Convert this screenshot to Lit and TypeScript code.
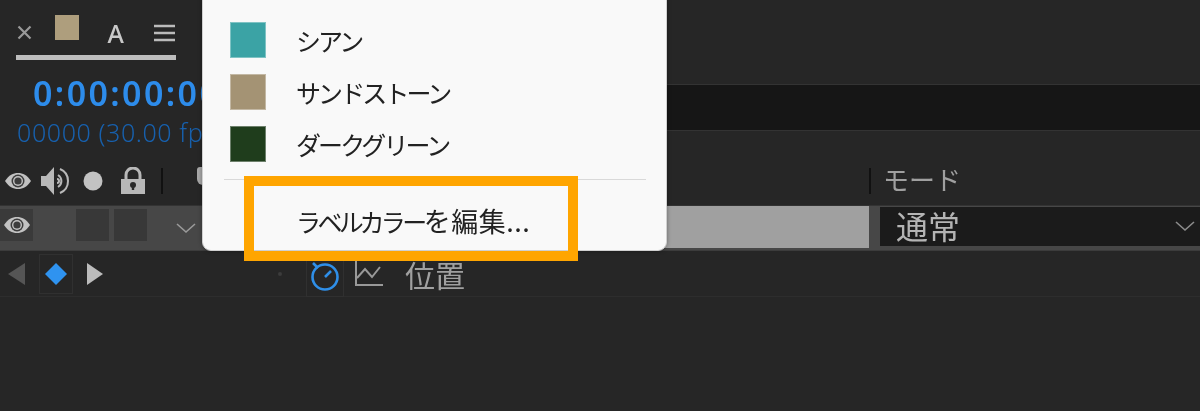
import { LitElement, html, css, svg } from "lit";
import { customElement } from "lit/decorators.js";

const eye = svg`<svg width="28" height="20" viewBox="0 0 28 20"><path d="M1 10C5 4 9 2 14 2s9 2 13 8c-4 6-8 8-13 8S5 16 1 10Z" fill="#c2c2c2"/><circle cx="14" cy="10" r="6.5" fill="#3c3c3c"/><circle cx="14" cy="10" r="5" fill="#c2c2c2"/><circle cx="14" cy="10" r="3.6" fill="#3c3c3c"/></svg>`;

@customElement("app-root")
export class AppRoot extends LitElement {
  static styles = css`
    :host { display: block; width: 1200px; height: 411px; overflow: hidden; position: relative; background: #262626; font-family: "Noto Sans CJK JP", "Noto Sans", sans-serif; filter: blur(0.4px); }
    svg { display: block; flex: none; }
    .top { display: flex; height: 157px; }
    .panel { width: 202px; flex: none; overflow: hidden; padding: 15px 0 0 16px; box-sizing: border-box; }
    .tabs { display: flex; height: 40px; width: 159px; }
    .tabs .close { margin: 10px 23px 0 1px; }
    .tabs .chip { width: 25px; height: 25px; background: #ae9e7d; }
    .tabs .a { margin: 0 30px 0 29px; width: 17px; color: #c8c8c8; font: 500 25px/36px "Noto Sans", sans-serif; }
    .tabs .menu { margin-top: 9px; }
    .rule { width: 160px; height: 5px; background: #bdbdbd; }
    .time { margin: 11px 0 0 17px; color: #2d8ceb; font: 600 34px/44px "Noto Sans", sans-serif; white-space: nowrap; letter-spacing: 2.4px; }
    .fps { margin: 1px 0 0 1px; color: #1760ad; font: 300 25px/32px "Noto Sans", sans-serif; white-space: nowrap; letter-spacing: .6px; }
    .bands { flex: 1; display: flex; flex-direction: column; }
    .spacer { height: 84px; border-bottom: 1px solid #333; }
    .dark { height: 45px; background: #161616; border-bottom: 1px solid #333; }
    .head { height: 48px; display: flex; align-items: center; position: relative; }
    .head .group { display: flex; align-items: center; }
    .bar { width: 2px; height: 26px; background: #111; }
    .tag { width: 8px; height: 18px; background: #a8a8a8; border-radius: 3px 0 0 6px; margin: -10px 0 0 34px; }
    .head .mode-wrap { margin-left: auto; width: 331px; display: flex; align-items: center; gap: 12px; color: #a0a0a0; font-size: 26px; line-height: 40px; }
    .mode-wrap span { margin-top: -4px; }
    .layer { height: 44px; background: #474747; display: flex; align-items: flex-start; border-top: 1px solid #333; border-bottom: 1px solid #3c3c3c; }
    .eyecell { width: 33px; height: 32px; background: #3a3a3a; display: flex; align-items: center; justify-content: center; margin-top: 3px; }
    .sq { width: 33px; height: 32px; background: #383838; margin-top: 3px; }
    .sq.first { margin-left: 43px; }
    .sq.second { margin-left: 5px; }
    .chev { margin: 17px 0 0 29px; }
    .grow { flex: 1; }
    .gray { width: 204px; height: 42px; background: #a0a0a0; }
    .sep { width: 11px; }
    .select { width: 320px; height: 39px; margin-top: 1px; background: #1b1b1b; display: flex; align-items: center; justify-content: space-between; padding: 0 5px 0 16px; box-sizing: border-box; color: #b4b4b4; font-size: 32px; line-height: 39px; }
    .select span { margin-top: -3px; }
    .prop { height: 45px; display: flex; align-items: center; border-bottom: 1px solid #2d2d2d; }
    .kf { width: 32px; height: 38px; border: 1px solid #303030; display: flex; align-items: center; justify-content: center; margin: 0 14px 0 14px; }
    .dot { width: 4px; height: 4px; border-radius: 50%; background: #3c3c3c; margin-left: 175px; }
    .watch { width: 36px; height: 36px; border: 1px solid #303030; display: flex; align-items: center; justify-content: center; margin: 8px 0 0 24px; }
    .watch svg { margin: -6px 0 0 -3px; }
    .graph { margin: -1px 0 0 10px; }
    .pos { margin: 0 0 0 22px; color: #a0a0a0; font-size: 30px; line-height: 40px; }
    .menu-pop { position: absolute; left: 202px; top: -1px; width: 465px; height: 252px; box-sizing: border-box; background: #f9f9f9; border-radius: 0 0 9px 9px; border: 1px solid #d0d0d0; box-shadow: 0 0 4px rgba(0,0,0,.35); padding: 14px 0 0 27px; color: #222; font-size: 25px; }
    .item { display: flex; align-items: center; gap: 30px; height: 52px; line-height: 36px; letter-spacing: -2.9px; }
    .sw { width: 36px; height: 36px; box-sizing: border-box; border: 1px solid rgba(255,255,255,.35); }
    .divider { height: 1px; background: #d9d9d9; margin: 9px 20px 0 -6px; }
    .edit { padding-left: 66px; line-height: 36px; margin-top: 23px; white-space: nowrap; }
    .edit .kana { letter-spacing: -3.6px; }
    .edit .rest { font-size: 27px; letter-spacing: .5px; }
    .hl { position: absolute; left: 244px; top: 176px; width: 334px; height: 85px; box-sizing: border-box; border: 10px solid #ffa500; }
  `;

  render() {
    return html`
      <div class="top">
        <div class="panel">
          <div class="tabs">
            <svg class="close" width="15" height="15" viewBox="0 0 15 15"><path d="M1.5 1.5l12 12M13.5 1.5l-12 12" stroke="#999" stroke-width="2.2"/></svg>
            <div class="chip"></div>
            <div class="a">A</div>
            <svg class="menu" width="21" height="18" viewBox="0 0 21 18"><path d="M0 2h21M0 9h21M0 16h21" stroke="#bbb" stroke-width="2.6"/></svg>
          </div>
          <div class="rule"></div>
          <div class="time">0:00:00:00</div>
          <div class="fps">00000 (30.00 fps)</div>
        </div>
        <div class="bands">
          <div class="spacer"></div>
          <div class="dark"></div>
        </div>
      </div>

      <div class="head">
        <div class="group">
          <div style="margin-left:4px">${eye}</div>
          <svg style="margin-left:8px" width="32" height="32" viewBox="0 0 32 32"><path d="M1 11h5l8-9v28l-8-9H1Z" fill="#b8b8b8"/><path d="M18 10a7 7 0 0 1 0 12M20 4a13 13 0 0 1 0 24M17 14a2 2 0 0 1 0 4" fill="none" stroke="#b8b8b8" stroke-width="2"/></svg>
          <svg style="margin-left:11px" width="20" height="20" viewBox="0 0 20 20"><circle cx="10" cy="10" r="9.5" fill="#c2c2c2"/></svg>
          <svg style="margin-left:17px" width="26" height="28" viewBox="0 0 26 28"><path d="M6 12V8a7 7 0 0 1 14 0v4" fill="none" stroke="#b8b8b8" stroke-width="3"/><path d="M1 12h24v15H1Z" fill="#b8b8b8"/><circle cx="13" cy="18" r="3" fill="#2a2a2a"/><path d="M11.8 18h2.4v5h-2.4Z" fill="#2a2a2a"/></svg>
          <div class="bar" style="margin-left:15px"></div>
          <div class="tag"></div>
        </div>
        <div class="mode-wrap"><div class="bar"></div><span>モード</span></div>
      </div>

      <div class="layer">
        <div class="eyecell">${eye}</div>
        <div class="sq first"></div>
        <div class="sq second"></div>
        <svg class="chev" width="20" height="11" viewBox="0 0 20 11"><path d="M1 1l9 8 9-8" fill="none" stroke="#9a9a9a" stroke-width="1.6"/></svg>
        <div class="grow"></div>
        <div class="gray"></div>
        <div class="sep"></div>
        <div class="select"><span>通常</span><svg width="20" height="11" viewBox="0 0 20 11"><path d="M1 1l9 8 9-8" fill="none" stroke="#8c8c8c" stroke-width="1.6"/></svg></div>
      </div>

      <div class="prop">
        <svg style="margin-left:8px" width="17" height="22" viewBox="0 0 17 22"><path d="M17 0v22L0 11Z" fill="#555"/></svg>
        <div class="kf"><svg width="24" height="24" viewBox="0 0 24 24"><path d="M12 1l11 11-11 11L1 12Z" fill="#2f93f0"/></svg></div>
        <svg width="16" height="22" viewBox="0 0 16 22"><path d="M0 0v22l16-11Z" fill="#bcbcbc"/></svg>
        <div class="dot"></div>
        <div class="watch"><svg width="32" height="32" viewBox="0 0 32 32"><circle cx="17" cy="18" r="12.5" fill="none" stroke="#2f8fe8" stroke-width="2.6"/><path d="M17 18l6-6M5 4l5 5" fill="none" stroke="#2f8fe8" stroke-width="2.6"/></svg></div>
        <svg class="graph" width="29" height="28" viewBox="0 0 29 28"><path d="M2 0v26h27M3 19l8-9 7 8 8-10" fill="none" stroke="#999" stroke-width="2"/></svg>
        <div class="pos">位置</div>
      </div>

      <div class="menu-pop">
        <div class="item"><div class="sw" style="background:#3ba3a5"></div><span>シアン</span></div>
        <div class="item"><div class="sw" style="background:#a49374"></div><span>サンドストーン</span></div>
        <div class="item"><div class="sw" style="background:#1f3d1c"></div><span>ダークグリーン</span></div>
        <div class="divider"></div>
        <div class="edit"><span class="kana">ラベルカラー</span><span class="rest">を編集...</span></div>
      </div>
      <div class="hl"></div>
    `;
  }
}
